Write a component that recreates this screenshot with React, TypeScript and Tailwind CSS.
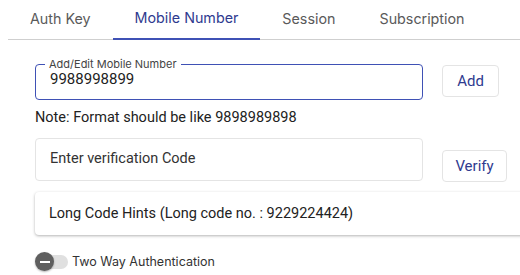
import { useState } from "react";

const tabs = ["Auth Key", "Mobile Number", "Session", "Subscription"];

function Tabs() {
  const active = 1;
  return (
    <div className="ml-2 flex h-10 border-b border-[#cfcfcf]">
      {tabs.map((t, i) => (
        <div
          key={t}
          className={
            i === active
              ? "flex items-center px-[22px] pb-[2px] text-[14.3px] text-[#2f3b8f] border-b-2 border-[#3f51b5] -mb-px"
              : "flex items-center px-[22px] pb-[2px] text-[14.3px] text-[#5a5a5a]"
          }
          style={{ fontFamily: "Inter, sans-serif" }}
        >
          {t}
        </div>
      ))}
    </div>
  );
}

function App() {
  const [mobile, setMobile] = useState("9988998899");
  const [code, setCode] = useState("");

  return (
    <div
      className="w-[520px] h-[275px] overflow-hidden bg-white text-[#222]"
      style={{ fontFamily: "Roboto, sans-serif" }}
    >
      <Tabs />
      <div className="pl-[35px]">
        {/* mobile number */}
        <div className="mt-[19px] flex items-start gap-[19px]">
          <fieldset className="h-[41px] w-[388px] rounded-[4px] border border-[#3f51b5] px-[14px]">
            <legend className="ml-[-5px] px-[4px] text-[11px] leading-[11px] text-[#444]" style={{ fontFamily: "Inter, sans-serif" }}>
              Add/Edit Mobile Number
            </legend>
            <input
              value={mobile}
              onChange={(e) => setMobile(e.target.value)}
              className="block -mt-[1px] w-full bg-transparent text-[15px] leading-[20px] text-[#222] outline-none"
            />
          </fieldset>
          <button className="mt-[6px] h-[32px] w-[57px] rounded-[4px] border border-[#e4e4e4] text-[15px] text-[#2f3b8f]">
            Add
          </button>
        </div>
        <p className="mt-[8px] text-[14.5px] leading-[20px] text-[#222]">Note: Format should be like 9898989898</p>

        {/* verification */}
        <div className="mt-[10px] flex items-start gap-[19px]">
          <input
            value={code}
            onChange={(e) => setCode(e.target.value)}
            placeholder="Enter verification Code"
            className="h-[43px] w-[388px] rounded-[4px] border border-[#e4e4e4] px-[14px] pb-[2px] text-[14.5px] text-[#222] outline-none placeholder:text-[#333]"
          />
          <button className="mt-[12px] h-[32px] w-[65px] rounded-[4px] border border-[#e4e4e4] text-[15px] text-[#2f3b8f]">
            Verify
          </button>
        </div>

        {/* long code card */}
        <div className="mt-[10px] flex h-[43px] w-[500px] items-center rounded-[4px] bg-white px-[14px] text-[14.5px] text-[#222] shadow-[0_1px_3px_rgba(0,0,0,0.3)]">
          Long Code Hints (Long code no. : 9229224424)
        </div>

        {/* toggle */}
        <div className="mt-[17px] flex items-center gap-[4px]">
          <div className="relative h-[20px] w-[33px]">
            <div className="absolute left-[3px] top-[3px] h-[14px] w-[30px] rounded-full bg-[#e0e0e0]" />
            <div className="absolute left-0 top-0 flex h-[19px] w-[19px] items-center justify-center rounded-full bg-[#5f5f5f] shadow-[0_1px_2px_rgba(0,0,0,0.3)]">
              <div className="h-[2px] w-[10px] bg-white" />
            </div>
          </div>
          <span className="text-[12.5px] text-[#333]" style={{ fontFamily: "Inter, sans-serif" }}>
            Two Way Authentication
          </span>
        </div>
      </div>
    </div>
  );
}

export default App;
